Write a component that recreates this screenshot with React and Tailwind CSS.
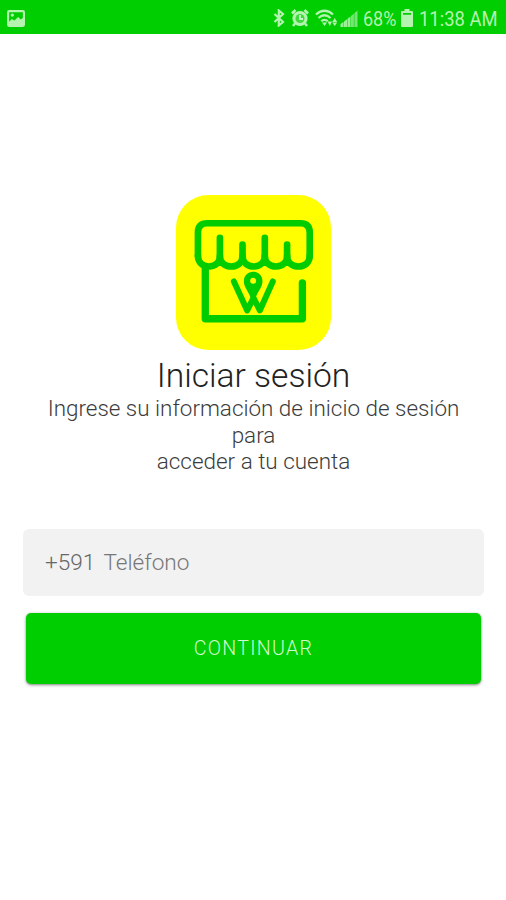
import React, { useState } from 'react';

const StatusBar = () => {
  return (
    <header className="flex h-[34px] items-center bg-[#00ce00] pl-[7px] pr-[9px] pt-[2px] text-[#b4f3b0]">
      <svg className="h-[17px] w-[18px]" viewBox="0 0 17 16">
        <path
          fill="currentColor"
          fillRule="evenodd"
          d="M2 0h13q2 0 2 2v12q0 2-2 2H2q-2 0-2-2V2q0-2 2-2zM2 2v9l2.500-2.500 2.500 1.500 3.500-3.500 2.500 2.500 2-1.500V2z"
        />
        <circle cx="5" cy="4.800" r="1.600" fill="currentColor" />
      </svg>

      <div className="ml-auto flex items-center">
        <svg className="h-[18px] w-[12px]" viewBox="0 0 12 18" fill="none" stroke="currentColor" strokeWidth="2.200">
          <path d="M1.500 5l8.500 8-4.200 3.500v-15L10 5l-8.500 8" />
        </svg>

        <svg className="ml-[6px] h-[18px] w-[18px]" viewBox="0 0 18 18">
          <circle cx="9" cy="9.500" r="7.600" fill="currentColor" />
          <path d="M1 4.500L4.500 1M17 4.500L13.500 1M4 14.500L2 17M14 14.500l2 2.500" stroke="currentColor" strokeWidth="2.500" />
          <circle cx="9" cy="9.500" r="4.500" fill="#00ce00" opacity="0.650" />
          <path d="M9 6v4h3" fill="none" stroke="#c8f8c8" strokeWidth="1.800" />
        </svg>

        <svg className="ml-[6px] h-[18px] w-[23px]" viewBox="0 0 23 18" fill="none" stroke="currentColor" strokeWidth="2.200">
          <path d="M1 5.500Q9.500-2 18 5.500M3.500 9Q9.500 3.500 15.500 9M6.200 12.200Q9.500 9.500 12.800 12.200" />
          <path d="M7 13.500h5l-2.500 3.500z" fill="currentColor" stroke="none" />
          <path d="M12.500 12.500h4.500l-2.200 4.500zM17.200 13h5l-2.500-4zM17.200 13.500h5l-2.500 3.500z" fill="currentColor" stroke="none" />
        </svg>

        <svg className="ml-[2px] h-[17px] w-[18px]" viewBox="0 0 17 17" fill="currentColor">
          <path d="M0 17v-3l3-2v5zM3.500 17v-5.500l3-2.300V17zM7 17V8.800L10 6.400V17z" opacity="0.850" />
          <path d="M10.500 17V6l2.900-2.300V17zM13.900 17V3.300L17 .500V17z" opacity="0.650" />
        </svg>

        <span className="ml-[5px] w-[35px] whitespace-nowrap pt-[2px] text-[20px] leading-none">
          <span className="inline-block origin-left scale-x-[0.900]">68%</span>
        </span>

        <svg className="ml-[3px] h-[18px] w-[12px]" viewBox="0 0 12 18" fill="currentColor">
          <path fillRule="evenodd" d="M3.500 0h5v2H11q1 0 1 1v14q0 1-1 1H1q-1 0-1-1V3q0-1 1-1h2.500zM2 4v1.800h8V4z" />
        </svg>

        <span className="ml-[6px] w-[78px] whitespace-nowrap pt-[2px] text-[20px] leading-none">
          <span className="inline-block origin-left scale-x-[0.920]">11:38 AM</span>
        </span>
      </div>
    </header>
  );
};

const Logo = () => {
  return (
    <svg
      className="ml-[1px] h-[155px] w-[155px]"
      viewBox="18 21 466 466"
      fill="none"
      stroke="#00cc00"
      strokeWidth="20"
      strokeLinecap="round"
      strokeLinejoin="round"
    >
      <rect x="18" y="21" width="466" height="466" rx="98" fill="#ffff00" stroke="none" />
      {/* awning */}
      <path d="M84 204V134q0-28 28-28h280q28 0 28 28v70" />
      <path d="M84 204c0 20 14 32 33 32s33-12 33-32c0 20 15 32 34 32s34-12 34-32c0 20 15 32 34 32s33-12 33-32c0 20 15 32 34 32s33-12 33-32c0 20 15 32 34 32s34-12 34-32" />
      <path d="M150 150v54M218 170v34M285 150v54M352 170v34" />
      {/* shop walls */}
      <path d="M106 240v153h292V285" strokeWidth="22" />
      {/* W and the map pin */}
      <path d="M192 281l40 87 19-38 19 38 39-87" strokeWidth="18" />
      <path
        fill="#00cc00"
        stroke="none"
        fillRule="evenodd"
        d="M250 252c-16 0-28 12-28 28 0 20 14 27 22 55h12c8-28 22-35 22-55 0-16-12-28-28-28zm0 18a9 9 0 1 1 0 18 9 9 0 0 1 0-18z"
      />
    </svg>
  );
};

const App = () => {
  const [phone, setPhone] = useState('');

  return (
    <div className="min-h-[900px] w-[506px] bg-white font-['Roboto',sans-serif]">
      <StatusBar />

      <main className="flex flex-col items-center pt-[161px]">
        <Logo />
        <h1 className="ml-px mt-[6px] text-[33.600px] font-light leading-[39px] text-[#222]">Iniciar sesión</h1>
        <p className="ml-px text-center text-[22.450px] font-light leading-[26.500px] text-[#3c3c3c]">
          Ingrese su información de inicio de sesión
          <br />
          para
          <br />
          acceder a tu cuenta
        </p>

        <form className="mt-[54px] w-full pl-[23px] pr-[22px]" onSubmit={(e) => e.preventDefault()}>
          <label className="flex h-[67px] items-center rounded-md bg-[#f2f2f2] pl-[22px] pt-[2px] text-[22.600px] font-[350] text-[#686868]">
            <span>+591</span>
            <input
              type="tel"
              value={phone}
              onChange={(e) => setPhone(e.target.value)}
              placeholder="Teléfono"
              className="ml-2 w-[300px] outline-none placeholder:text-[#777]"
            />
          </label>
          <button
            type="submit"
            className="ml-[3px] mt-[17px] block h-[71px] w-[455px] rounded-[5px] bg-[#00ce00] pt-px text-[19.600px] font-[350] tracking-[1.300px] text-[#d0fad0] shadow-[0_1px_3px_rgba(0,0,0,0.5)]"
          >
            CONTINUAR
          </button>
        </form>
      </main>
    </div>
  );
};

export default App;
